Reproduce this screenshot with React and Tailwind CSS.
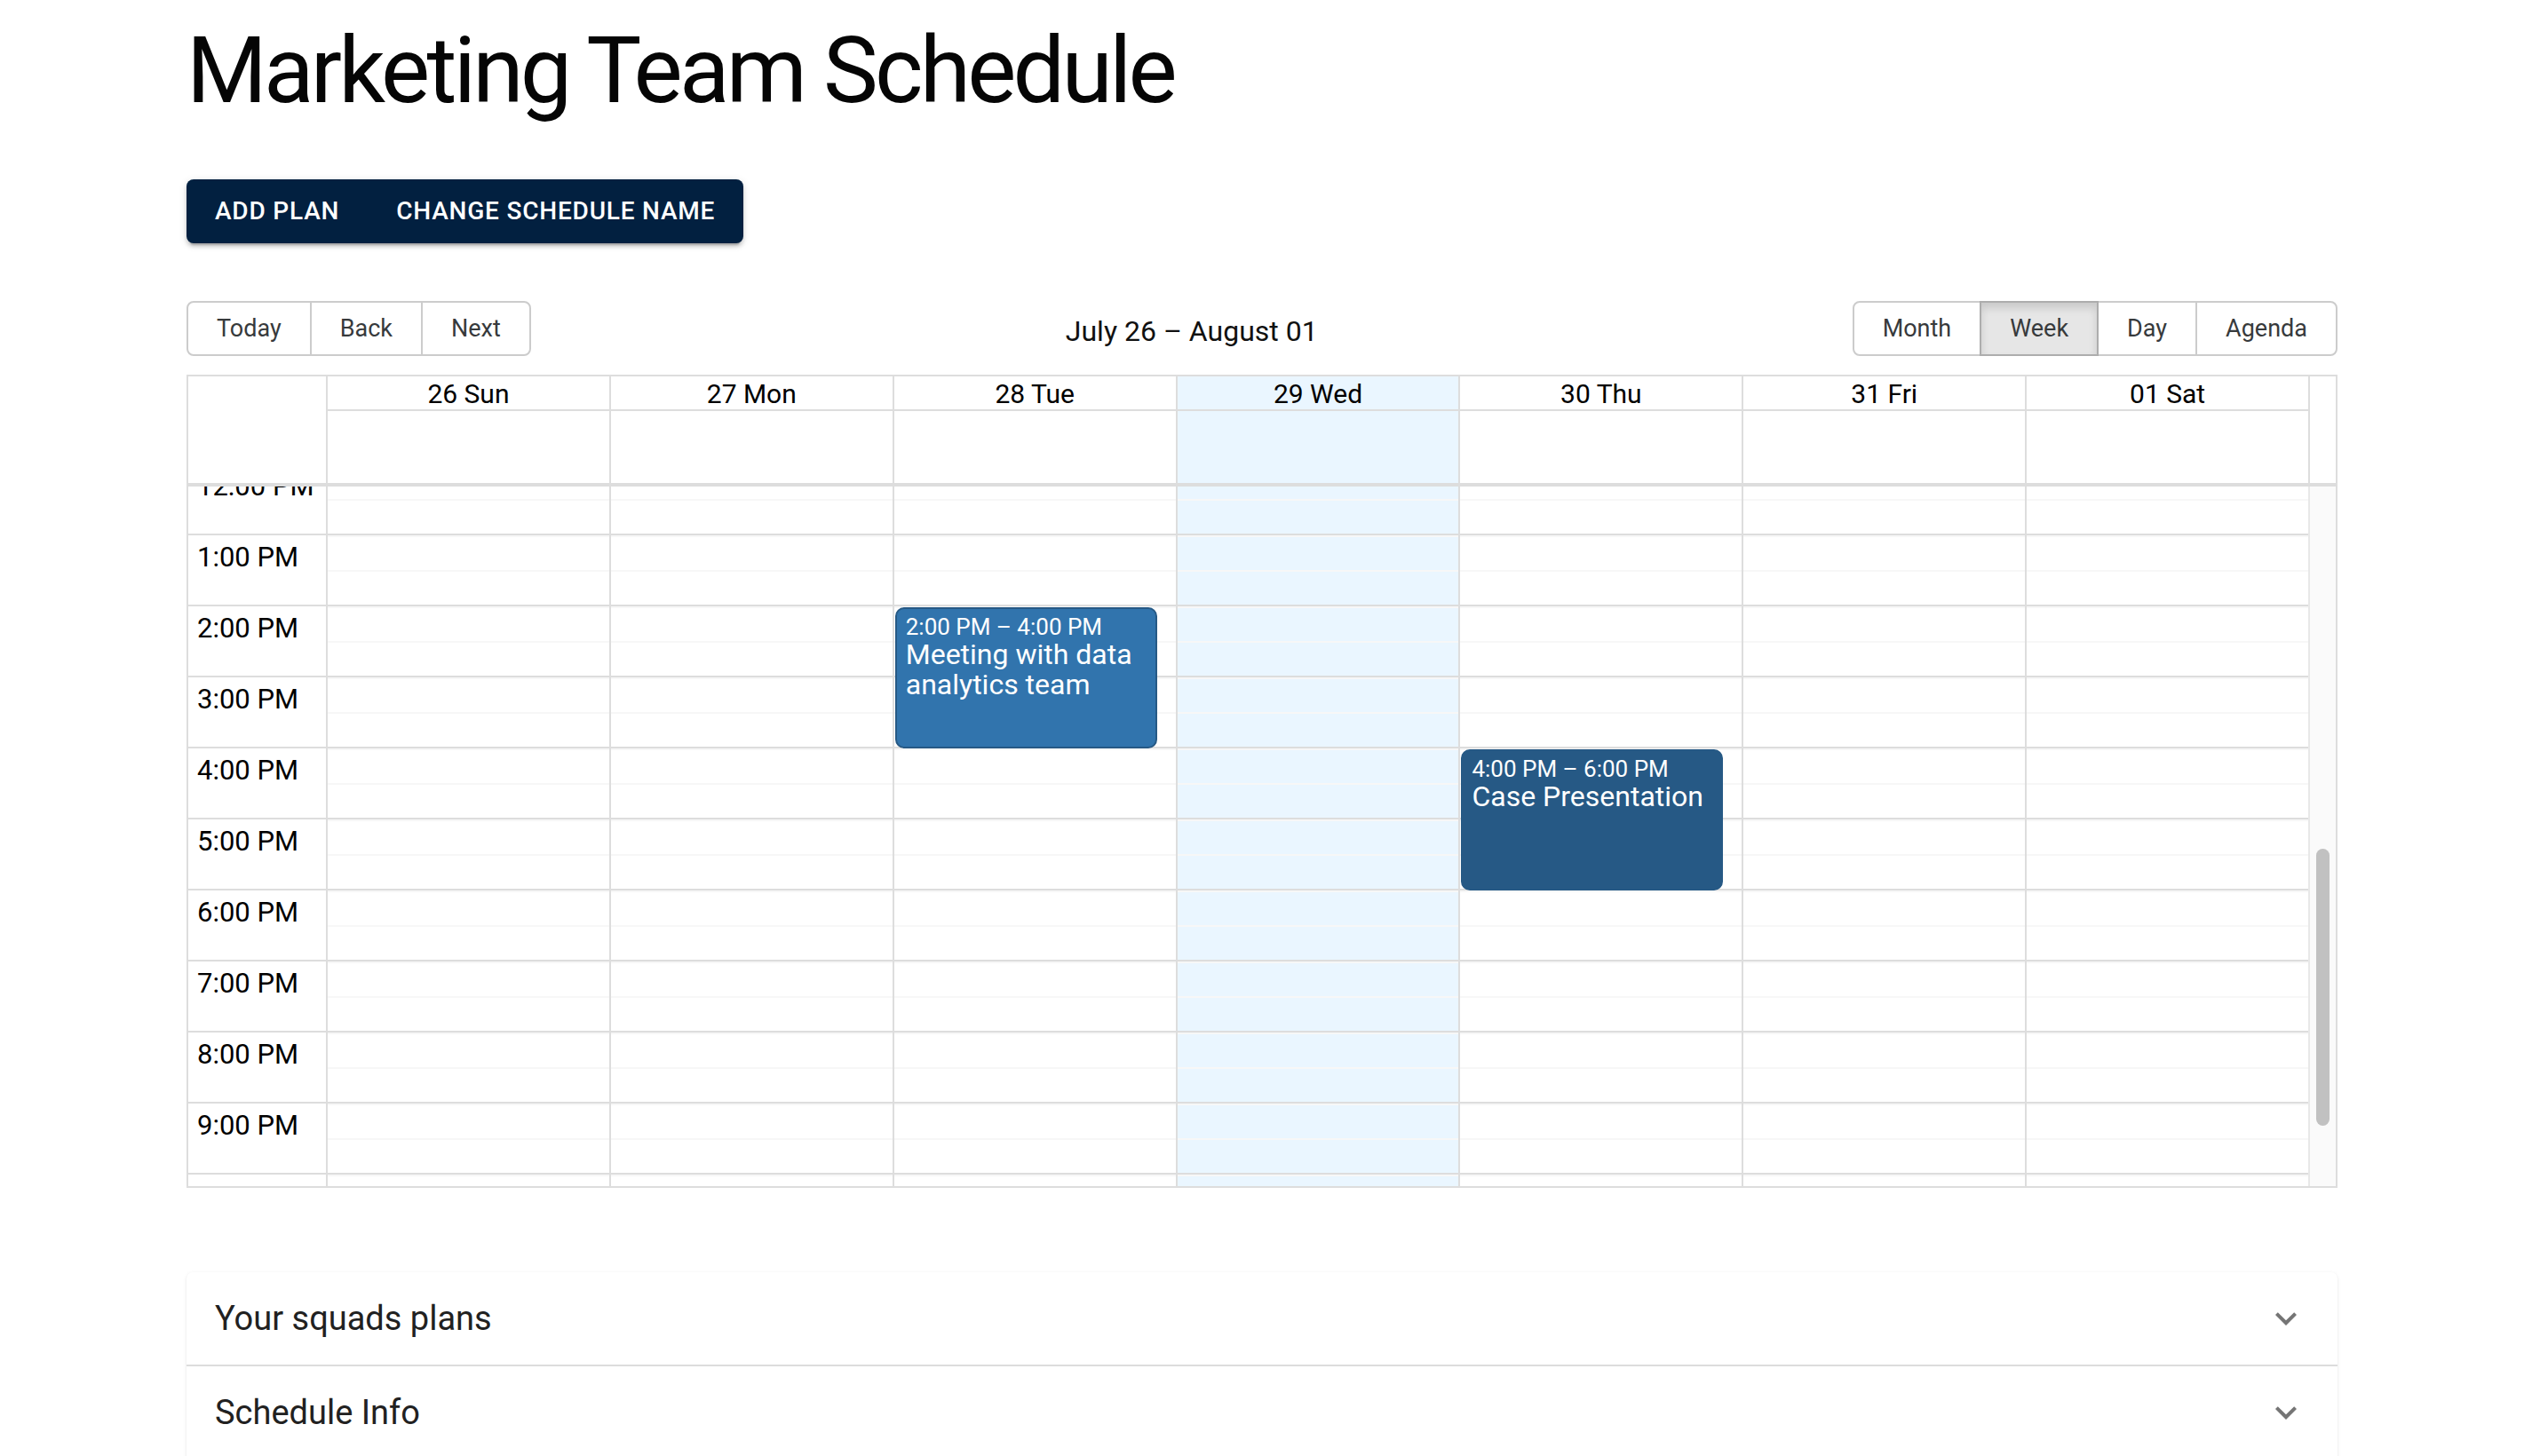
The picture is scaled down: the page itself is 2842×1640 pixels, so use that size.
import React from "react";

const DAYS = [
  { label: "26 Sun" },
  { label: "27 Mon" },
  { label: "28 Tue" },
  { label: "29 Wed", today: true },
  { label: "30 Thu" },
  { label: "31 Fri" },
  { label: "01 Sat" },
];

const HOURS = [
  "12:00 PM",
  "1:00 PM",
  "2:00 PM",
  "3:00 PM",
  "4:00 PM",
  "5:00 PM",
  "6:00 PM",
  "7:00 PM",
  "8:00 PM",
  "9:00 PM",
  "10:00 PM",
  "11:00 PM",
];

const EVENTS = {
  2: [
    {
      top: 160,
      height: 160,
      label: "2:00 PM – 4:00 PM",
      title: "Meeting with data analytics team",
      selected: false,
    },
  ],
  4: [
    {
      top: 320,
      height: 160,
      label: "4:00 PM – 6:00 PM",
      title: "Case Presentation",
      selected: true,
    },
  ],
};

function ToolButton({ children, first, last, active }) {
  return (
    <button
      className={
        "relative h-[62px] border-2 px-[32px] text-[27px] leading-none text-[#373a3c] " +
        (first ? "rounded-l-[8px] " : "-ml-[2px] ") +
        (last ? "rounded-r-[8px] " : "") +
        (active
          ? "z-10 border-[#adadad] bg-[#e6e6e6] shadow-[inset_0_6px_10px_rgba(0,0,0,0.125)]"
          : "border-[#ccc] bg-white")
      }
    >
      {children}
    </button>
  );
}

function Chevron() {
  return (
    <svg viewBox="0 0 24 24" className="h-[48px] w-[48px] fill-[#757575]">
      <path d="M16.59 8.59 12 13.17 7.41 8.59 6 10l6 6 6-6z" />
    </svg>
  );
}

export default function App() {
  return (
    <div className="min-h-screen bg-white font-['Roboto',sans-serif] text-black">
      <div className="px-[210px] pb-[120px]">
        <h1 className="pt-[19px] text-[104px] font-normal leading-[122px] tracking-[-3.8px] text-[#050505]">
          Marketing Team Schedule
        </h1>

        <div className="mt-[61px] inline-flex h-[72px] rounded-[8px] bg-[#022040] shadow-[0_6px_2px_-4px_rgba(0,0,0,0.2),0_4px_4px_0_rgba(0,0,0,0.14),0_2px_10px_0_rgba(0,0,0,0.12)]">
          <button className="px-[32px] text-[28px] font-medium uppercase tracking-[0.8px] text-white">
            Add plan
          </button>
          <button className="px-[32px] text-[28px] font-medium uppercase tracking-[0.8px] text-white">
            Change schedule name
          </button>
        </div>

        {/* Toolbar */}
        <div className="mt-[65px] flex h-[62px] items-center">
          <div className="flex">
            <ToolButton first>Today</ToolButton>
            <ToolButton>Back</ToolButton>
            <ToolButton last>Next</ToolButton>
          </div>
          <div className="flex-1 pt-[6px] text-center text-[32px] text-[#111]">
            July 26 – August 01
          </div>
          <div className="flex">
            <ToolButton first>Month</ToolButton>
            <ToolButton active>Week</ToolButton>
            <ToolButton>Day</ToolButton>
            <ToolButton last>Agenda</ToolButton>
          </div>
        </div>

        {/* Calendar */}
        <div className="mt-[21px] flex flex-col border-2 border-[#ddd]">
          {/* Header */}
          <div className="flex">
            <div className="w-[157px] shrink-0 border-r-2 border-[#ddd]" />
            <div className="flex min-w-0 flex-1 flex-col border-r-2 border-[#ddd]">
              <div className="flex h-[39px] border-b-2 border-[#ddd]">
                {DAYS.map((d, i) => (
                  <div
                    key={d.label}
                    className={
                      "flex flex-1 items-center justify-center pt-[2px] text-[30px] font-normal text-black " +
                      (i > 0 ? "border-l-2 border-[#ddd] " : "") +
                      (d.today ? "bg-[#eaf6ff]" : "")
                    }
                  >
                    {d.label}
                  </div>
                ))}
              </div>
              <div className="flex h-[81px]">
                {DAYS.map((d, i) => (
                  <div
                    key={d.label}
                    className={
                      "flex-1 " +
                      (i > 0 ? "border-l-2 border-[#ddd] " : "") +
                      (d.today ? "bg-[#eaf6ff]" : "")
                    }
                  />
                ))}
              </div>
            </div>
            <div className="w-[29px] shrink-0" />
          </div>

          {/* Time content */}
          <div className="flex h-[792px] border-t-4 border-[#ddd]">
            <div className="min-w-0 flex-1 overflow-hidden">
              <div className="-mt-[25px] flex">
                {/* gutter */}
                <div className="w-[157px] shrink-0 border-r-2 border-[#ddd]">
                  {HOURS.map((h) => (
                    <div
                      key={h}
                      className="h-[80px] border-b-2 border-[#ddd] pl-[10px] pt-[7px] text-[31px] leading-[36px] text-black"
                    >
                      {h}
                    </div>
                  ))}
                </div>
                {/* day columns */}
                <div className="flex min-w-0 flex-1">
                  {DAYS.map((d, i) => (
                    <div
                      key={d.label}
                      className={
                        "relative flex-1 " +
                        (i > 0 ? "border-l-2 border-[#ddd] " : "") +
                        (d.today ? "bg-[#eaf6ff]" : "")
                      }
                    >
                      {HOURS.map((h) => (
                        <div
                          key={h}
                          className="flex h-[80px] flex-col border-b-2 border-[#ddd]"
                        >
                          <div className="flex-1 border-t-2 border-[#f7f7f7]" />
                          <div className="flex-1 border-t-2 border-[#f7f7f7]" />
                        </div>
                      ))}
                      {(EVENTS[i] || []).map((ev) => (
                        <div
                          key={ev.title}
                          className={
                            "absolute left-[1px] right-[21px] overflow-hidden rounded-[10px] border-2 border-[#265985] px-[10px] pt-[6px] text-white " +
                            (ev.selected ? "bg-[#265985]" : "bg-[#3174ad]")
                          }
                          style={{ top: ev.top + 1, height: ev.height - 1 }}
                        >
                          <div className="text-[26px] leading-[28px]">{ev.label}</div>
                          <div className="text-[32px] leading-[34px]">{ev.title}</div>
                        </div>
                      ))}
                    </div>
                  ))}
                </div>
              </div>
            </div>
            {/* scrollbar */}
            <div className="flex w-[31px] shrink-0 flex-col items-center border-l-2 border-[#e8e8e8] bg-[#fafafa] pt-[408px]">
              <div className="h-[312px] w-[15px] rounded-full bg-[#c1c1c1]" />
            </div>
          </div>
        </div>

        {/* Accordions */}
        <div className="mt-[95px] rounded-t-[7px] bg-white shadow-[0_3px_2px_-2px_rgba(0,0,0,0.16),0_1px_2px_0_rgba(0,0,0,0.08),0_1px_5px_0_rgba(0,0,0,0.06)]">
          <div className="flex h-[104px] items-center justify-between pl-[32px] pr-[34px]">
            <span className="text-[38px] text-[#212121]">Your squads plans</span>
            <Chevron />
          </div>
          <div className="flex h-[106px] items-center justify-between border-t-2 border-[#dcdcdc] pl-[32px] pr-[34px]">
            <span className="text-[38px] text-[#212121]">Schedule Info</span>
            <Chevron />
          </div>
        </div>
      </div>
    </div>
  );
}
